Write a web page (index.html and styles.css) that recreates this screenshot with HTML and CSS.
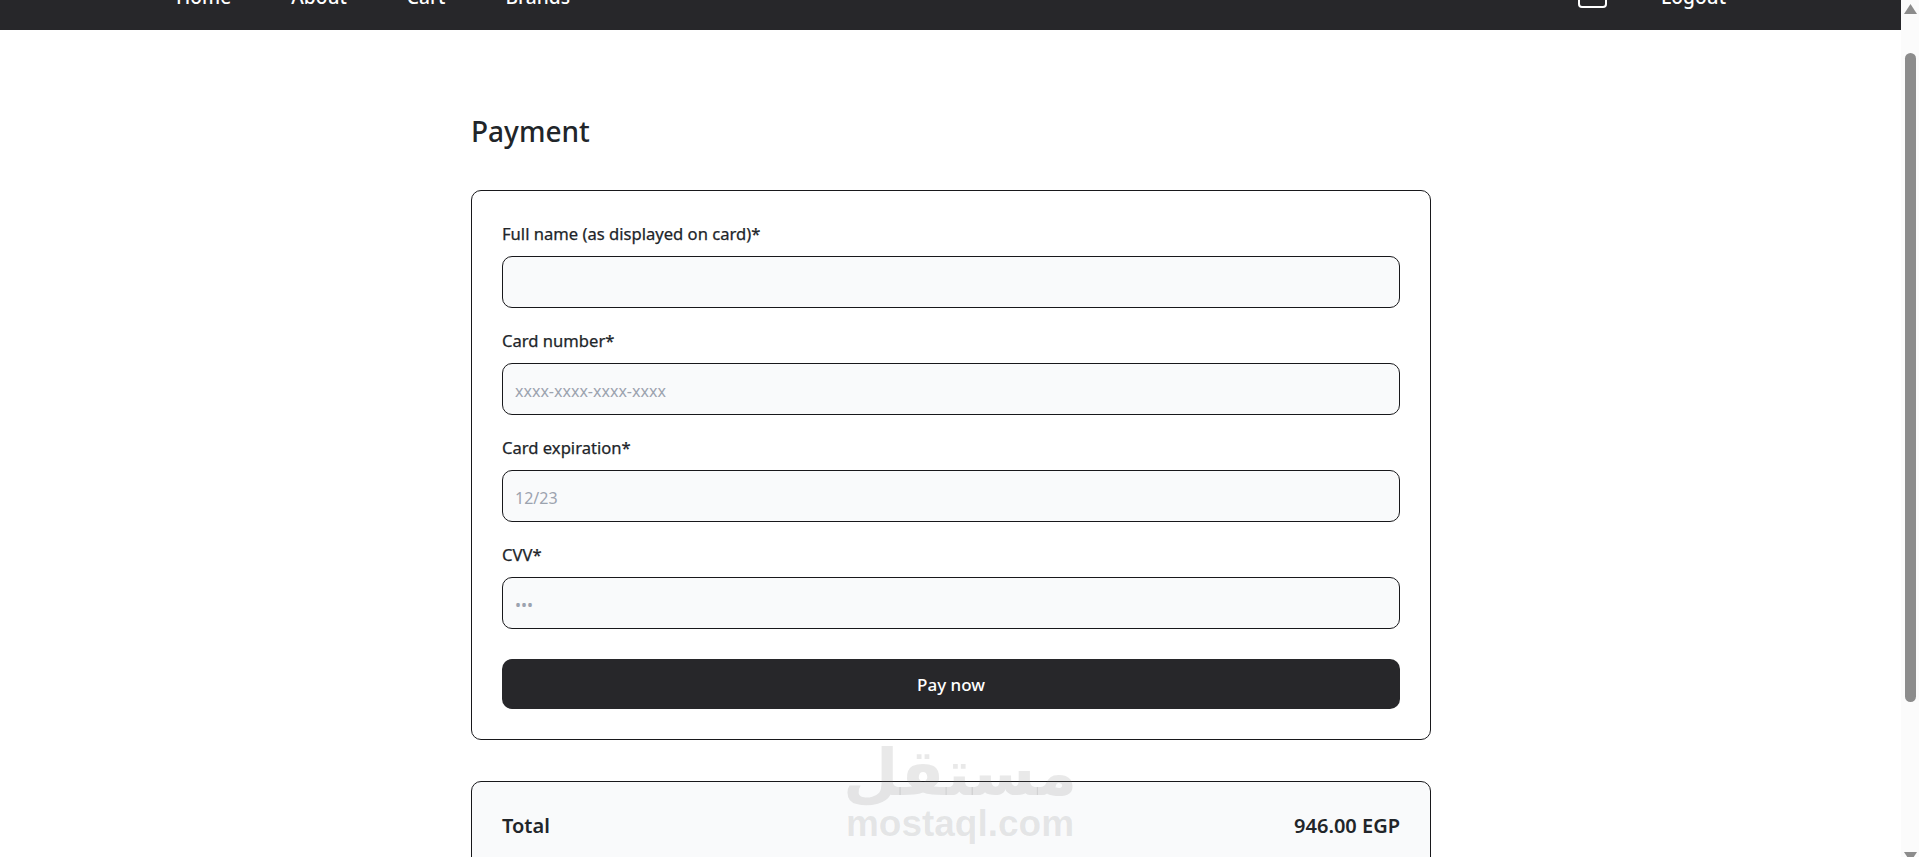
FILE: index.html
```html
<!DOCTYPE html>
<html lang="en">

<head>
    <meta charset="UTF-8">
    <meta name="viewport" content="width=device-width, initial-scale=1.0">
    <title>Payment</title>
    <link rel="stylesheet" href="styles.css">
</head>

<body>
    <div class="page">
        <header class="navbar">
            <nav class="nav-links">
                <a href="#">Home</a>
                <a href="#">About</a>
                <a href="#">Cart</a>
                <a href="#">Brands</a>
            </nav>
            <div class="nav-right">
                <span class="nav-icon"></span>
                <a href="#">Logout</a>
            </div>
        </header>
        <main class="content">
            <h1>Payment</h1>
            <form class="card pay-form">
                <label for="fullName">Full name (as displayed on card)*</label>
                <input type="text" id="fullName">
                <label for="cardNumber">Card number*</label>
                <input type="text" id="cardNumber" placeholder="xxxx-xxxx-xxxx-xxxx">
                <label for="expiry">Card expiration*</label>
                <input type="text" id="expiry" placeholder="12/23">
                <label for="cvv">CVV*</label>
                <input type="text" id="cvv" placeholder="•••">
                <button type="button">Pay now</button>
            </form>
            <div class="card total">
                <span>Total</span>
                <span>946.00 EGP</span>
            </div>
        </main>
    </div>
    <aside class="scrollbar">
        <svg class="arrow" width="13" height="10" viewBox="0 0 13 10"><path d="M6.5 0L13 10H0z"/></svg>
        <div class="thumb"></div>
        <svg class="arrow arrow-down" width="13" height="10" viewBox="0 0 13 10"><path d="M0 0H13L6.5 10z"/></svg>
    </aside>
    <div class="watermark">
        <span class="watermark-ar" lang="ar" dir="rtl">مستقل</span>
        <span class="watermark-en">mostaql.com</span>
    </div>
</body>
</html>
```

FILE: styles.css
```css
body {
    font-family: "Noto Sans", Arial, sans-serif;
    background-color: #fff;
    color: #212529;
    margin: 0;
    height: 857px;
    overflow: hidden;
    display: flex;
}

.page {
    flex: 1;
    min-width: 0;
    height: 857px;
    overflow: hidden;
}

.navbar {
    background-color: #27272a;
    height: 30px;
    display: flex;
    justify-content: space-between;
    align-items: flex-end;
    padding: 0 175px 21px 176px;
    box-sizing: border-box;
}

.navbar a {
    color: #fff;
    text-decoration: none;
    font-size: 19.2px;
    font-weight: 500;
    line-height: 24px;
}

.nav-links {
    display: flex;
    gap: 60px;
}

.nav-right {
    display: flex;
    align-items: flex-end;
    gap: 54px;
}

.nav-icon {
    width: 29px;
    height: 30px;
    margin-bottom: 1px;
    border: 2px solid #fff;
    border-radius: 4px;
    box-sizing: border-box;
}

.content {
    width: 960px;
    margin-left: 471px;
}

h1 {
    font-size: 28px;
    font-weight: 500;
    line-height: 38px;
    margin: 82px 0 40px;
}

.card {
    border: 1px solid #18181b;
    border-radius: 10px;
    padding: 30px;
    box-sizing: border-box;
}

.pay-form {
    height: 550px;
    display: flex;
    flex-direction: column;
}

label {
    font-size: 16.6px;
    font-weight: 400;
    -webkit-text-stroke: 0.25px #212529;
    line-height: 26px;
    margin-bottom: 9px;
}

input {
    height: 52px;
    flex: none;
    margin-bottom: 20px;
    padding: 3px 12px 0;
    font-family: inherit;
    font-size: 16px;
    color: #212529;
    background-color: #f9fafb;
    border: 1px solid #18181b;
    border-radius: 10px;
    box-sizing: border-box;
}

input::placeholder {
    color: #9ca3af;
}

button {
    height: 50px;
    margin-top: 10px;
    font-family: inherit;
    font-size: 17px;
    font-weight: 500;
    color: #fff;
    background-color: #27272a;
    border: none;
    border-radius: 10px;
}

.total {
    margin-top: 41px;
    background-color: #f9fafb;
    display: flex;
    justify-content: space-between;
    font-size: 20px;
    font-weight: 600;
    padding-top: 30px;
    height: 120px;
}

.scrollbar {
    width: 18px;
    height: 857px;
    overflow: hidden;
    flex: none;
    background-color: #fbfbfb;
    display: flex;
    flex-direction: column;
    align-items: center;
    padding-top: 4px;
    box-sizing: border-box;
}

.arrow {
    fill: #8c8c8c;
    flex: none;
}

.thumb {
    width: 11px;
    height: 649px;
    flex: none;
    margin: 39px 0 150px;
    background-color: #8c8c8c;
    border-radius: 6px;
}

.watermark {
    position: absolute;
    left: 847px;
    top: 738px;
    width: 226px;
    display: flex;
    flex-direction: column;
    align-items: center;
    color: rgba(120, 120, 120, 0.16);
    pointer-events: none;
}

.watermark-ar {
    font-family: "DejaVu Sans", sans-serif;
    font-size: 64px;
    font-weight: 700;
    line-height: 70px;
}

.watermark-en {
    font-family: "Liberation Sans", Arial, sans-serif;
    font-size: 37px;
    font-weight: 700;
    line-height: 32px;
}
```
